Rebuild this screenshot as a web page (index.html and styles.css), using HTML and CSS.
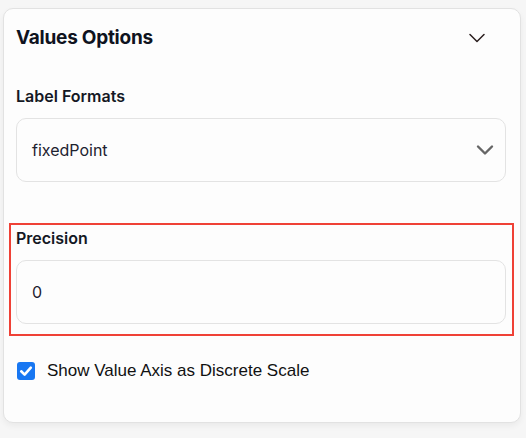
FILE: index.html
```html
<!DOCTYPE html>
<html lang="en">
<head>
<meta charset="utf-8">
<title>Values Options</title>
<link rel="stylesheet" href="styles.css">
</head>
<body>
<div class="page">
  <section class="card">
    <header class="card-header">
      <h2 class="card-title">Values Options</h2>
      <svg class="collapse-icon" width="16" height="16" viewBox="0 0 16 16" aria-hidden="true">
        <polyline points="1,4.5 8,11.5 15,4.5" fill="none" stroke="#2b1f1f" stroke-width="1.5" stroke-linecap="round" stroke-linejoin="round"/>
      </svg>
    </header>

    <div class="field">
      <label class="field-label">Label Formats</label>
      <div class="control select">
        <span class="control-value">fixedPoint</span>
        <svg class="select-icon" width="18" height="18" viewBox="0 0 18 18" aria-hidden="true">
          <polyline points="2,5.5 9,12.5 16,5.5" fill="none" stroke="#666666" stroke-width="2.4" stroke-linecap="round" stroke-linejoin="round"/>
        </svg>
      </div>
    </div>

    <div class="field field-highlight">
      <label class="field-label">Precision</label>
      <div class="control">
        <span class="control-value">0</span>
      </div>
    </div>

    <label class="check-row">
      <span class="checkbox">
        <svg width="18" height="18" viewBox="0 0 18 18" aria-hidden="true">
          <polyline points="4.2,9.3 7.6,12.6 13.8,5.6" fill="none" stroke="#ffffff" stroke-width="2.6" stroke-linecap="round" stroke-linejoin="round"/>
        </svg>
      </span>
      <span class="check-label">Show Value Axis as Discrete Scale</span>
    </label>
  </section>
</div>
</body>
</html>
```

FILE: styles.css
```css
* {
  box-sizing: border-box;
}

html, body {
  margin: 0;
  padding: 0;
}

body {
  background: #f6f6f6;
  font-family: Inter, "Noto Sans", sans-serif;
  color: #111827;
  width: 526px;
  height: 438px;
  overflow: hidden;
}

.page {
  padding: 8px 5px 0 3px;
}

.card {
  width: 518px;
  height: 415px;
  background: #fdfdfd;
  border: 1px solid #e2e2e2;
  border-radius: 10px;
  padding: 17px 14px 0 12px;
  box-shadow: 0 3px 6px rgba(0, 0, 0, 0.05);
  display: flex;
  flex-direction: column;
}

.card-header {
  display: flex;
  align-items: center;
  justify-content: space-between;
  height: 24px;
  padding-right: 21px;
}

.card-title {
  margin: 0;
  font-size: 19px;
  line-height: 24px;
  font-weight: 700;
  letter-spacing: -0.25px;
  color: #0f1320;
}

.collapse-icon {
  display: block;
}

.field {
  display: flex;
  flex-direction: column;
  gap: 10px;
}

.card-header + .field {
  margin-top: 34px;
}

.field-label {
  font-size: 16px;
  line-height: 24px;
  font-weight: 600;
  color: #141824;
}

.control {
  height: 64px;
  border: 1px solid #e3e3e3;
  border-radius: 10px;
  background: #fdfdfd;
  display: flex;
  align-items: center;
  justify-content: space-between;
  padding: 0 11px 0 15px;
}

.control-value {
  font-size: 16px;
  line-height: 24px;
  color: #1d2230;
}

.select-icon {
  display: block;
}

.field-highlight {
  margin: 41px -8px 0 -7px;
  padding: 1px 6px 10px 5px;
  border: 2px solid #ef4136;
}

.check-row {
  margin-top: 23px;
  display: flex;
  align-items: center;
  gap: 12px;
  height: 24px;
  padding-left: 1px;
}

.checkbox {
  width: 18px;
  height: 18px;
  border-radius: 3px;
  background: #1877f2;
  display: flex;
}

.checkbox svg {
  display: block;
}

.check-label {
  font-family: "Liberation Sans", Arial, sans-serif;
  font-size: 17px;
  line-height: 24px;
  color: #111111;
}
```
